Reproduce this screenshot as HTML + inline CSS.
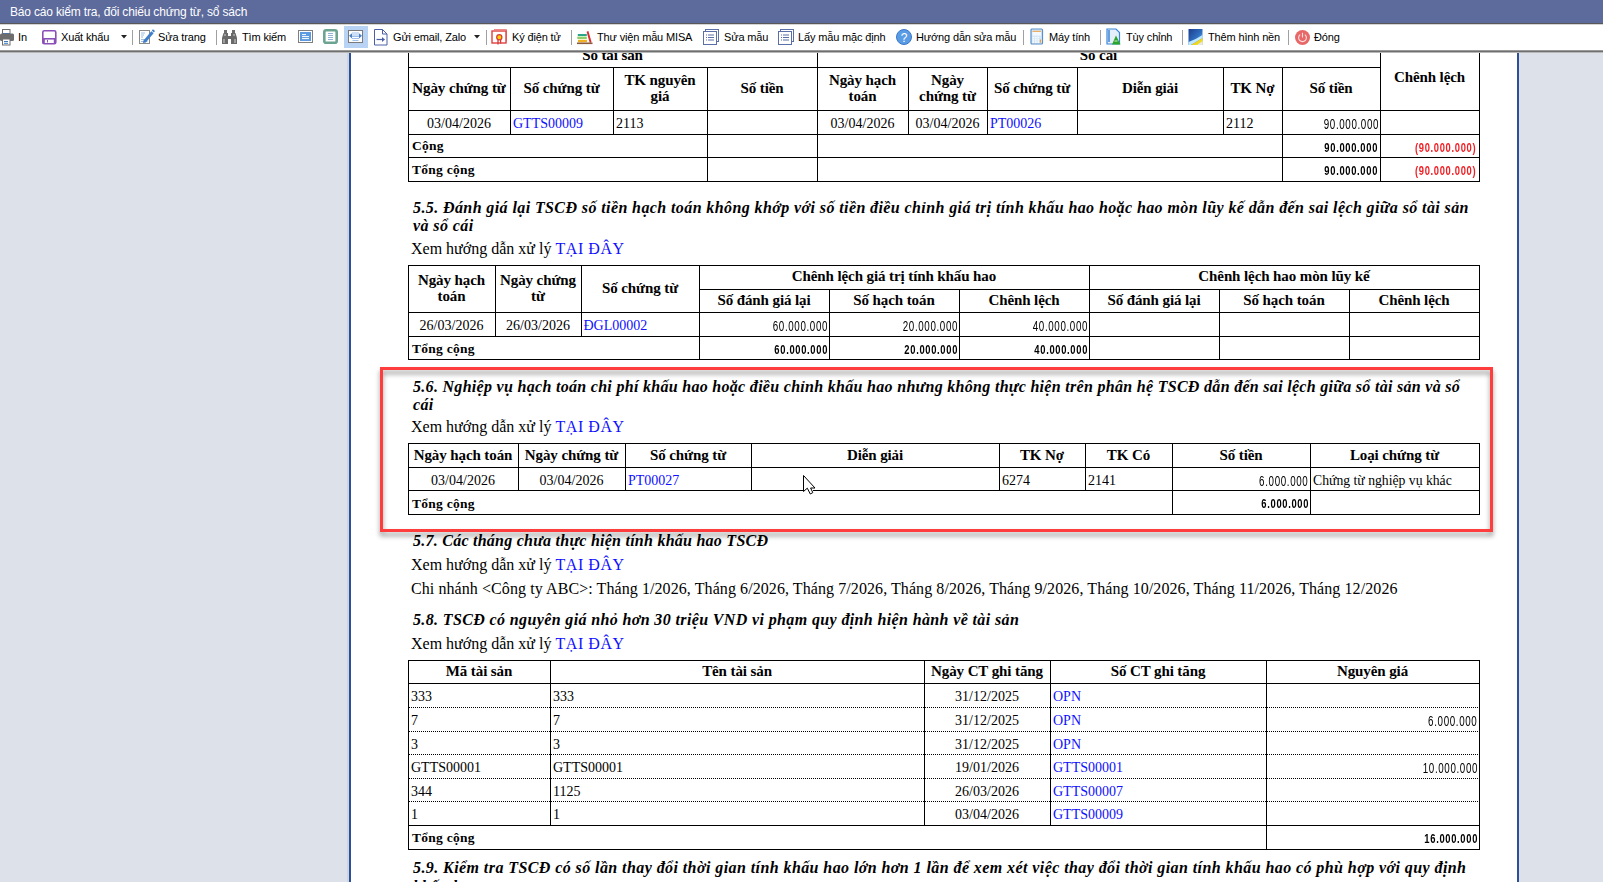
<!DOCTYPE html>
<html><head><meta charset="utf-8"><title>Báo cáo</title>
<style>
html,body{margin:0;padding:0;width:1603px;height:882px;overflow:hidden;background:#dde1e9}
.l{position:absolute;display:block}
.t{position:absolute;white-space:nowrap;color:#000}
.th{font:bold 15px/15px "Liberation Serif", serif;letter-spacing:-.1px}
.td{font:14px/14px "Liberation Serif", serif;letter-spacing:0px}
.tot{font:bold 13.5px/13.5px "Liberation Serif", serif;letter-spacing:.25px}
.lnk{color:#1010ff}
.lnk2{color:#1010ff;letter-spacing:.55px}
.h5{font:bold italic 16px/16px "Liberation Serif", serif}
.xem{font:16px/16px "Liberation Serif", serif}
.num{font-family:"Liberation Sans", sans-serif;white-space:nowrap}
.dot{background:repeating-linear-gradient(90deg,#000 0,#000 1px,transparent 1px,transparent 2px)}
#pg{position:absolute;left:0;top:0;width:1603px;height:882px;overflow:hidden}
#clip{position:absolute;left:0;top:52px;width:1603px;height:830px;overflow:hidden}
#inner{position:absolute;left:0;top:-52px;width:1603px;height:882px}
.tb{position:absolute;top:31px;font:11px/13px "Liberation Sans", sans-serif;color:#000;white-space:nowrap;letter-spacing:-.15px}
.title{position:absolute;left:10px;top:5px;font:12px/14px "Liberation Sans", sans-serif;color:#fff;letter-spacing:-.17px;white-space:nowrap}
</style></head><body>
<div id="pg">
<div id="clip"><div id="inner">
<div class="l" style="left:0;top:52px;width:1603px;height:830px;background:#dde1e9"></div>
<div class="l" style="left:347px;top:52px;width:2px;height:830px;background:#cfd4de"></div>
<div class="l" style="left:349px;top:52px;width:2px;height:830px;background:#2b4f98"></div>
<div class="l" style="left:351px;top:52px;width:1166px;height:830px;background:#fff"></div>
<div class="l" style="left:1517px;top:52px;width:2px;height:830px;background:#2b4f98"></div>
<div class="t th" style="left:408px;top:48.44px;width:409px;text-align:center;">Sổ tài sản</div>
<div class="t th" style="left:817px;top:48.44px;width:563px;text-align:center;">Sổ cái</div>
<div class="l" style="left:408px;top:67px;width:973px;height:1px;background:#000"></div>
<div class="l" style="left:408px;top:44px;width:1px;height:138px;background:#000"></div>
<div class="l" style="left:817px;top:44px;width:1px;height:138px;background:#000"></div>
<div class="l" style="left:1380px;top:44px;width:1px;height:138px;background:#000"></div>
<div class="l" style="left:1479px;top:44px;width:1px;height:138px;background:#000"></div>
<div class="l" style="left:510px;top:67px;width:1px;height:68px;background:#000"></div>
<div class="l" style="left:613px;top:67px;width:1px;height:68px;background:#000"></div>
<div class="l" style="left:707px;top:67px;width:1px;height:68px;background:#000"></div>
<div class="l" style="left:908px;top:67px;width:1px;height:68px;background:#000"></div>
<div class="l" style="left:987px;top:67px;width:1px;height:68px;background:#000"></div>
<div class="l" style="left:1077px;top:67px;width:1px;height:68px;background:#000"></div>
<div class="l" style="left:1223px;top:67px;width:1px;height:68px;background:#000"></div>
<div class="l" style="left:1282px;top:67px;width:1px;height:68px;background:#000"></div>
<div class="l" style="left:408px;top:110px;width:1072px;height:1px;background:#000"></div>
<div class="l" style="left:408px;top:134px;width:1072px;height:1px;background:#000"></div>
<div class="l" style="left:408px;top:157px;width:1072px;height:1px;background:#000"></div>
<div class="l" style="left:408px;top:181px;width:1072px;height:1px;background:#000"></div>
<div class="l" style="left:707px;top:134px;width:1px;height:48px;background:#000"></div>
<div class="l" style="left:1282px;top:134px;width:1px;height:48px;background:#000"></div>
<div class="t th" style="left:408px;top:80.94px;width:102px;text-align:center;">Ngày chứng từ</div>
<div class="t th" style="left:510px;top:80.94px;width:103px;text-align:center;">Số chứng từ</div>
<div class="t th" style="left:613px;top:73.14px;width:94px;text-align:center;">TK nguyên</div>
<div class="t th" style="left:613px;top:89.24px;width:94px;text-align:center;">giá</div>
<div class="t th" style="left:707px;top:80.94px;width:110px;text-align:center;">Số tiền</div>
<div class="t th" style="left:817px;top:72.64px;width:91px;text-align:center;">Ngày hạch</div>
<div class="t th" style="left:817px;top:88.94px;width:91px;text-align:center;">toán</div>
<div class="t th" style="left:908px;top:72.64px;width:79px;text-align:center;">Ngày</div>
<div class="t th" style="left:908px;top:88.94px;width:79px;text-align:center;">chứng từ</div>
<div class="t th" style="left:987px;top:80.94px;width:90px;text-align:center;">Số chứng từ</div>
<div class="t th" style="left:1077px;top:80.94px;width:146px;text-align:center;">Diễn giải</div>
<div class="t th" style="left:1223px;top:80.94px;width:59px;text-align:center;">TK Nợ</div>
<div class="t th" style="left:1282px;top:80.94px;width:98px;text-align:center;">Số tiền</div>
<div class="t th" style="left:1380px;top:69.94px;width:99px;text-align:center;">Chênh lệch</div>
<div class="t td" style="left:408px;top:117.28px;width:102px;text-align:center;">03/04/2026</div>
<div class="t td lnk" style="left:513px;top:117.28px;width:100px;text-align:left;">GTTS00009</div>
<div class="t td" style="left:616px;top:117.28px;width:91px;text-align:left;">2113</div>
<div class="t td" style="left:817px;top:117.28px;width:91px;text-align:center;">03/04/2026</div>
<div class="t td" style="left:908px;top:117.28px;width:79px;text-align:center;">03/04/2026</div>
<div class="t td lnk" style="left:990px;top:117.28px;width:87px;text-align:left;">PT00026</div>
<div class="t td" style="left:1226px;top:117.28px;width:56px;text-align:left;">2112</div>
<div class="t num" style="right:224.37px;top:117.45px;font-size:14px;line-height:14px;font-weight:normal;color:#000;letter-spacing:0.9px;transform:scaleX(0.7);transform-origin:100% 50%">90.000.000</div>
<div class="t tot" style="left:412px;top:139.19px;width:295px;text-align:left;">Cộng</div>
<div class="t tot" style="left:412px;top:162.89px;width:295px;text-align:left;">Tổng cộng</div>
<div class="t num" style="right:225.33px;top:141.63px;font-size:12.6px;line-height:12.6px;font-weight:bold;color:#000;letter-spacing:0.9px;transform:scaleX(0.745);transform-origin:100% 50%">90.000.000</div>
<div class="t num" style="right:225.33px;top:164.63px;font-size:12.6px;line-height:12.6px;font-weight:bold;color:#000;letter-spacing:0.9px;transform:scaleX(0.745);transform-origin:100% 50%">90.000.000</div>
<div class="t num" style="right:126.33px;top:141.63px;font-size:12.6px;line-height:12.6px;font-weight:bold;color:#f01e23;letter-spacing:0.9px;transform:scaleX(0.745);transform-origin:100% 50%">(90.000.000)</div>
<div class="t num" style="right:126.33px;top:164.63px;font-size:12.6px;line-height:12.6px;font-weight:bold;color:#f01e23;letter-spacing:0.9px;transform:scaleX(0.745);transform-origin:100% 50%">(90.000.000)</div>
<div class="t h5" style="left:413px;top:199.90px;width:1087px;text-align:left;letter-spacing:.4px">5.5. Đánh giá lại TSCĐ số tiền hạch toán không khớp với số tiền điều chỉnh giá trị tính khấu hao hoặc hao mòn lũy kế dẫn đến sai lệch giữa sổ tài sản</div>
<div class="t h5" style="left:413px;top:217.60px;width:1087px;text-align:left;letter-spacing:.4px">và sổ cái</div>
<div class="t xem" style="left:411px;top:241.20px;width:589px;text-align:left;">Xem hướng dẫn xử lý <span class="lnk2">TẠI ĐÂY</span></div>
<div class="l" style="left:408px;top:265px;width:1072px;height:1px;background:#000"></div>
<div class="l" style="left:699px;top:289px;width:781px;height:1px;background:#000"></div>
<div class="l" style="left:408px;top:312px;width:1072px;height:1px;background:#000"></div>
<div class="l" style="left:408px;top:336px;width:1072px;height:1px;background:#000"></div>
<div class="l" style="left:408px;top:359px;width:1072px;height:1px;background:#000"></div>
<div class="l" style="left:408px;top:265px;width:1px;height:72px;background:#000"></div>
<div class="l" style="left:495px;top:265px;width:1px;height:72px;background:#000"></div>
<div class="l" style="left:581px;top:265px;width:1px;height:72px;background:#000"></div>
<div class="l" style="left:699px;top:265px;width:1px;height:72px;background:#000"></div>
<div class="l" style="left:1089px;top:265px;width:1px;height:72px;background:#000"></div>
<div class="l" style="left:1479px;top:265px;width:1px;height:72px;background:#000"></div>
<div class="l" style="left:829px;top:289px;width:1px;height:71px;background:#000"></div>
<div class="l" style="left:959px;top:289px;width:1px;height:71px;background:#000"></div>
<div class="l" style="left:1219px;top:289px;width:1px;height:71px;background:#000"></div>
<div class="l" style="left:1349px;top:289px;width:1px;height:71px;background:#000"></div>
<div class="l" style="left:408px;top:265px;width:1px;height:95px;background:#000"></div>
<div class="l" style="left:699px;top:265px;width:1px;height:95px;background:#000"></div>
<div class="l" style="left:1089px;top:265px;width:1px;height:95px;background:#000"></div>
<div class="l" style="left:1479px;top:265px;width:1px;height:95px;background:#000"></div>
<div class="t th" style="left:408px;top:273.44px;width:87px;text-align:center;">Ngày hạch</div>
<div class="t th" style="left:408px;top:288.94px;width:87px;text-align:center;">toán</div>
<div class="t th" style="left:495px;top:273.44px;width:86px;text-align:center;">Ngày chứng</div>
<div class="t th" style="left:495px;top:288.94px;width:86px;text-align:center;">từ</div>
<div class="t th" style="left:581px;top:280.94px;width:118px;text-align:center;">Số chứng từ</div>
<div class="t th" style="left:699px;top:269.04px;width:390px;text-align:center;">Chênh lệch giá trị tính khấu hao</div>
<div class="t th" style="left:1089px;top:269.04px;width:390px;text-align:center;">Chênh lệch hao mòn lũy kế</div>
<div class="t th" style="left:699px;top:292.84px;width:130px;text-align:center;">Số đánh giá lại</div>
<div class="t th" style="left:829px;top:292.84px;width:130px;text-align:center;">Số hạch toán</div>
<div class="t th" style="left:959px;top:292.84px;width:130px;text-align:center;">Chênh lệch</div>
<div class="t th" style="left:1089px;top:292.84px;width:130px;text-align:center;">Số đánh giá lại</div>
<div class="t th" style="left:1219px;top:292.84px;width:130px;text-align:center;">Số hạch toán</div>
<div class="t th" style="left:1349px;top:292.84px;width:130px;text-align:center;">Chênh lệch</div>
<div class="t td" style="left:408px;top:318.77px;width:87px;text-align:center;">26/03/2026</div>
<div class="t td" style="left:495px;top:318.77px;width:86px;text-align:center;">26/03/2026</div>
<div class="t td lnk" style="left:583.5px;top:318.77px;width:115.5px;text-align:left;">ĐGL00002</div>
<div class="t num" style="right:775.37px;top:319.45px;font-size:14px;line-height:14px;font-weight:normal;color:#000;letter-spacing:0.9px;transform:scaleX(0.7);transform-origin:100% 50%">60.000.000</div>
<div class="t num" style="right:645.37px;top:319.45px;font-size:14px;line-height:14px;font-weight:normal;color:#000;letter-spacing:0.9px;transform:scaleX(0.7);transform-origin:100% 50%">20.000.000</div>
<div class="t num" style="right:515.37px;top:319.45px;font-size:14px;line-height:14px;font-weight:normal;color:#000;letter-spacing:0.9px;transform:scaleX(0.7);transform-origin:100% 50%">40.000.000</div>
<div class="t tot" style="left:412px;top:341.69px;width:287px;text-align:left;">Tổng cộng</div>
<div class="t num" style="right:775.33px;top:343.63px;font-size:12.6px;line-height:12.6px;font-weight:bold;color:#000;letter-spacing:0.9px;transform:scaleX(0.745);transform-origin:100% 50%">60.000.000</div>
<div class="t num" style="right:645.33px;top:343.63px;font-size:12.6px;line-height:12.6px;font-weight:bold;color:#000;letter-spacing:0.9px;transform:scaleX(0.745);transform-origin:100% 50%">20.000.000</div>
<div class="t num" style="right:515.33px;top:343.63px;font-size:12.6px;line-height:12.6px;font-weight:bold;color:#000;letter-spacing:0.9px;transform:scaleX(0.745);transform-origin:100% 50%">40.000.000</div>
<div class="t h5" style="left:413px;top:379.40px;width:1087px;text-align:left;letter-spacing:.3px">5.6. Nghiệp vụ hạch toán chi phí khấu hao hoặc điều chỉnh khấu hao nhưng không thực hiện trên phân hệ TSCĐ dẫn đến sai lệch giữa sổ tài sản và sổ</div>
<div class="t h5" style="left:413px;top:396.90px;width:1087px;text-align:left;letter-spacing:.3px">cái</div>
<div class="t xem" style="left:411px;top:419.30px;width:589px;text-align:left;">Xem hướng dẫn xử lý <span class="lnk2">TẠI ĐÂY</span></div>
<div class="l" style="left:408px;top:443px;width:1072px;height:1px;background:#000"></div>
<div class="l" style="left:408px;top:467px;width:1072px;height:1px;background:#000"></div>
<div class="l" style="left:408px;top:490px;width:1072px;height:1px;background:#000"></div>
<div class="l" style="left:408px;top:514px;width:1072px;height:1px;background:#000"></div>
<div class="l" style="left:408px;top:443px;width:1px;height:48px;background:#000"></div>
<div class="l" style="left:518px;top:443px;width:1px;height:48px;background:#000"></div>
<div class="l" style="left:625px;top:443px;width:1px;height:48px;background:#000"></div>
<div class="l" style="left:751px;top:443px;width:1px;height:48px;background:#000"></div>
<div class="l" style="left:999px;top:443px;width:1px;height:48px;background:#000"></div>
<div class="l" style="left:1085px;top:443px;width:1px;height:48px;background:#000"></div>
<div class="l" style="left:1172px;top:443px;width:1px;height:48px;background:#000"></div>
<div class="l" style="left:1310px;top:443px;width:1px;height:48px;background:#000"></div>
<div class="l" style="left:1479px;top:443px;width:1px;height:48px;background:#000"></div>
<div class="l" style="left:408px;top:443px;width:1px;height:72px;background:#000"></div>
<div class="l" style="left:1172px;top:443px;width:1px;height:72px;background:#000"></div>
<div class="l" style="left:1310px;top:443px;width:1px;height:72px;background:#000"></div>
<div class="l" style="left:1479px;top:443px;width:1px;height:72px;background:#000"></div>
<div class="t th" style="left:408px;top:447.94px;width:110px;text-align:center;">Ngày hạch toán</div>
<div class="t th" style="left:518px;top:447.94px;width:107px;text-align:center;">Ngày chứng từ</div>
<div class="t th" style="left:625px;top:447.94px;width:126px;text-align:center;">Số chứng từ</div>
<div class="t th" style="left:751px;top:447.94px;width:248px;text-align:center;">Diễn giải</div>
<div class="t th" style="left:999px;top:447.94px;width:86px;text-align:center;">TK Nợ</div>
<div class="t th" style="left:1085px;top:447.94px;width:87px;text-align:center;">TK Có</div>
<div class="t th" style="left:1172px;top:447.94px;width:138px;text-align:center;">Số tiền</div>
<div class="t th" style="left:1310px;top:447.94px;width:169px;text-align:center;">Loại chứng từ</div>
<div class="t td" style="left:408px;top:474.47px;width:110px;text-align:center;">03/04/2026</div>
<div class="t td" style="left:518px;top:474.47px;width:107px;text-align:center;">03/04/2026</div>
<div class="t td lnk" style="left:628px;top:474.47px;width:123px;text-align:left;">PT00027</div>
<div class="t td" style="left:1002px;top:474.47px;width:83px;text-align:left;">6274</div>
<div class="t td" style="left:1088px;top:474.47px;width:84px;text-align:left;">2141</div>
<div class="t num" style="right:294.37px;top:474.45px;font-size:14px;line-height:14px;font-weight:normal;color:#000;letter-spacing:0.9px;transform:scaleX(0.7);transform-origin:100% 50%">6.000.000</div>
<div class="t td" style="left:1313px;top:474.17px;width:166px;text-align:left;font-size:13.7px">Chứng từ nghiệp vụ khác</div>
<div class="t tot" style="left:412px;top:496.69px;width:760px;text-align:left;">Tổng cộng</div>
<div class="t num" style="right:294.33px;top:497.63px;font-size:12.6px;line-height:12.6px;font-weight:bold;color:#000;letter-spacing:0.9px;transform:scaleX(0.745);transform-origin:100% 50%">6.000.000</div>
<div class="t h5" style="left:413px;top:533.40px;width:1087px;text-align:left;letter-spacing:.25px">5.7. Các tháng chưa thực hiện tính khấu hao TSCĐ</div>
<div class="t xem" style="left:411px;top:557.10px;width:589px;text-align:left;">Xem hướng dẫn xử lý <span class="lnk2">TẠI ĐÂY</span></div>
<div class="t xem" style="left:411px;top:581.00px;width:1089px;text-align:left;letter-spacing:.08px">Chi nhánh &lt;Công ty ABC&gt;: Tháng 1/2026, Tháng 6/2026, Tháng 7/2026, Tháng 8/2026, Tháng 9/2026, Tháng 10/2026, Tháng 11/2026, Tháng 12/2026</div>
<div class="t h5" style="left:413px;top:611.80px;width:1087px;text-align:left;letter-spacing:.37px">5.8. TSCĐ có nguyên giá nhỏ hơn 30 triệu VND vi phạm quy định hiện hành về tài sản</div>
<div class="t xem" style="left:411px;top:636.20px;width:589px;text-align:left;">Xem hướng dẫn xử lý <span class="lnk2">TẠI ĐÂY</span></div>
<div class="l" style="left:408px;top:660px;width:1072px;height:1px;background:#000"></div>
<div class="l" style="left:408px;top:683px;width:1072px;height:1px;background:#000"></div>
<div class="l dot" style="left:409px;top:707px;width:141px;height:1px"></div>
<div class="l dot" style="left:551px;top:707px;width:373px;height:1px"></div>
<div class="l dot" style="left:925px;top:707px;width:125px;height:1px"></div>
<div class="l dot" style="left:1051px;top:707px;width:215px;height:1px"></div>
<div class="l dot" style="left:1267px;top:707px;width:212px;height:1px"></div>
<div class="l dot" style="left:409px;top:731px;width:141px;height:1px"></div>
<div class="l dot" style="left:551px;top:731px;width:373px;height:1px"></div>
<div class="l dot" style="left:925px;top:731px;width:125px;height:1px"></div>
<div class="l dot" style="left:1051px;top:731px;width:215px;height:1px"></div>
<div class="l dot" style="left:1267px;top:731px;width:212px;height:1px"></div>
<div class="l dot" style="left:409px;top:754px;width:141px;height:1px"></div>
<div class="l dot" style="left:551px;top:754px;width:373px;height:1px"></div>
<div class="l dot" style="left:925px;top:754px;width:125px;height:1px"></div>
<div class="l dot" style="left:1051px;top:754px;width:215px;height:1px"></div>
<div class="l dot" style="left:1267px;top:754px;width:212px;height:1px"></div>
<div class="l dot" style="left:409px;top:778px;width:141px;height:1px"></div>
<div class="l dot" style="left:551px;top:778px;width:373px;height:1px"></div>
<div class="l dot" style="left:925px;top:778px;width:125px;height:1px"></div>
<div class="l dot" style="left:1051px;top:778px;width:215px;height:1px"></div>
<div class="l dot" style="left:1267px;top:778px;width:212px;height:1px"></div>
<div class="l dot" style="left:409px;top:801px;width:141px;height:1px"></div>
<div class="l dot" style="left:551px;top:801px;width:373px;height:1px"></div>
<div class="l dot" style="left:925px;top:801px;width:125px;height:1px"></div>
<div class="l dot" style="left:1051px;top:801px;width:215px;height:1px"></div>
<div class="l dot" style="left:1267px;top:801px;width:212px;height:1px"></div>
<div class="l" style="left:408px;top:825px;width:1072px;height:1px;background:#000"></div>
<div class="l" style="left:408px;top:849px;width:1072px;height:1px;background:#000"></div>
<div class="l" style="left:408px;top:660px;width:1px;height:166px;background:#000"></div>
<div class="l" style="left:550px;top:660px;width:1px;height:166px;background:#000"></div>
<div class="l" style="left:924px;top:660px;width:1px;height:166px;background:#000"></div>
<div class="l" style="left:1050px;top:660px;width:1px;height:166px;background:#000"></div>
<div class="l" style="left:1266px;top:660px;width:1px;height:166px;background:#000"></div>
<div class="l" style="left:1479px;top:660px;width:1px;height:166px;background:#000"></div>
<div class="l" style="left:408px;top:660px;width:1px;height:190px;background:#000"></div>
<div class="l" style="left:1266px;top:660px;width:1px;height:190px;background:#000"></div>
<div class="l" style="left:1479px;top:660px;width:1px;height:190px;background:#000"></div>
<div class="t th" style="left:408px;top:663.64px;width:142px;text-align:center;">Mã tài sản</div>
<div class="t th" style="left:550px;top:663.64px;width:374px;text-align:center;">Tên tài sản</div>
<div class="t th" style="left:924px;top:663.64px;width:126px;text-align:center;">Ngày CT ghi tăng</div>
<div class="t th" style="left:1050px;top:663.64px;width:216px;text-align:center;">Số CT ghi tăng</div>
<div class="t th" style="left:1266px;top:663.64px;width:213px;text-align:center;">Nguyên giá</div>
<div class="t td" style="left:411px;top:690.27px;width:139px;text-align:left;">333</div>
<div class="t td" style="left:553px;top:690.27px;width:371px;text-align:left;">333</div>
<div class="t td" style="left:924px;top:690.27px;width:126px;text-align:center;">31/12/2025</div>
<div class="t td lnk" style="left:1053px;top:690.27px;width:213px;text-align:left;">OPN</div>
<div class="t td" style="left:411px;top:714.27px;width:139px;text-align:left;">7</div>
<div class="t td" style="left:553px;top:714.27px;width:371px;text-align:left;">7</div>
<div class="t td" style="left:924px;top:714.27px;width:126px;text-align:center;">31/12/2025</div>
<div class="t td lnk" style="left:1053px;top:714.27px;width:213px;text-align:left;">OPN</div>
<div class="t num" style="right:125.37px;top:714.45px;font-size:14px;line-height:14px;font-weight:normal;color:#000;letter-spacing:0.9px;transform:scaleX(0.7);transform-origin:100% 50%">6.000.000</div>
<div class="t td" style="left:411px;top:738.27px;width:139px;text-align:left;">3</div>
<div class="t td" style="left:553px;top:738.27px;width:371px;text-align:left;">3</div>
<div class="t td" style="left:924px;top:738.27px;width:126px;text-align:center;">31/12/2025</div>
<div class="t td lnk" style="left:1053px;top:738.27px;width:213px;text-align:left;">OPN</div>
<div class="t td" style="left:411px;top:761.27px;width:139px;text-align:left;">GTTS00001</div>
<div class="t td" style="left:553px;top:761.27px;width:371px;text-align:left;">GTTS00001</div>
<div class="t td" style="left:924px;top:761.27px;width:126px;text-align:center;">19/01/2026</div>
<div class="t td lnk" style="left:1053px;top:761.27px;width:213px;text-align:left;">GTTS00001</div>
<div class="t num" style="right:125.37px;top:761.45px;font-size:14px;line-height:14px;font-weight:normal;color:#000;letter-spacing:0.9px;transform:scaleX(0.7);transform-origin:100% 50%">10.000.000</div>
<div class="t td" style="left:411px;top:785.27px;width:139px;text-align:left;">344</div>
<div class="t td" style="left:553px;top:785.27px;width:371px;text-align:left;">1125</div>
<div class="t td" style="left:924px;top:785.27px;width:126px;text-align:center;">26/03/2026</div>
<div class="t td lnk" style="left:1053px;top:785.27px;width:213px;text-align:left;">GTTS00007</div>
<div class="t td" style="left:411px;top:808.27px;width:139px;text-align:left;">1</div>
<div class="t td" style="left:553px;top:808.27px;width:371px;text-align:left;">1</div>
<div class="t td" style="left:924px;top:808.27px;width:126px;text-align:center;">03/04/2026</div>
<div class="t td lnk" style="left:1053px;top:808.27px;width:213px;text-align:left;">GTTS00009</div>
<div class="t tot" style="left:412px;top:831.39px;width:854px;text-align:left;">Tổng cộng</div>
<div class="t num" style="right:125.33px;top:832.63px;font-size:12.6px;line-height:12.6px;font-weight:bold;color:#000;letter-spacing:0.9px;transform:scaleX(0.745);transform-origin:100% 50%">16.000.000</div>
<div class="t h5" style="left:413px;top:860.10px;width:1087px;text-align:left;letter-spacing:.42px">5.9. Kiểm tra TSCĐ có số lần thay đổi thời gian tính khấu hao lớn hơn 1 lần để xem xét việc thay đổi thời gian tính khấu hao có phù hợp với quy định</div>
<div class="t h5" style="left:413px;top:878.90px;width:1087px;text-align:left;letter-spacing:.4px">khấu hao</div>
<div class="l" style="left:380px;top:367px;width:1107px;height:159px;border:3px solid #ff3d3d;filter:drop-shadow(0px 4px 2.5px rgba(0,0,0,.42))"></div>
<svg class="l" style="left:802px;top:474px" width="16" height="22" viewBox="0 0 16 22"><rect x="2" y="15.5" width="9" height="2" fill="#fff"/><path d="M1.5 1.5 L1.5 17.5 L5.3 14.2 L8.3 20 L10.8 18.6 L8.6 14 L13 14 Z" fill="#fff" stroke="#000" stroke-width="1" stroke-linejoin="miter"/></svg>
</div></div>
<div class="l" style="left:0;top:0;width:1603px;height:23px;background:#5c6a9c"></div>
<div class="title">Báo cáo kiểm tra, đối chiếu chứng từ, sổ sách</div>
<div class="l" style="left:0;top:23px;width:1603px;height:1px;background:#585858"></div>
<div class="l" style="left:0;top:24px;width:1603px;height:26px;background:#fff"></div>
<div class="l" style="left:0;top:24px;width:1603px;height:1px;background:#d4d4d4"></div>
<div class="l" style="left:0;top:50px;width:1603px;height:1px;background:#9a9a9a"></div>
<div class="l" style="left:0;top:51px;width:1603px;height:1px;background:#6f6f6f"></div>
<div class="l" style="left:0;top:52px;width:1603px;height:1px;background:#b8b8b8"></div>
<svg class="l" style="left:0px;top:28px" width="15" height="18" viewBox="0 0 15 18"><rect x="2.5" y="1.5" width="7.5" height="4.5" fill="#fff" stroke="#6e6e6e"/><line x1="2.5" y1="5.5" x2="10" y2="5.5" stroke="#3c78c0"/><rect x="0" y="5.5" width="14" height="7.5" rx="1.5" fill="#6e6e6e"/><rect x="2.5" y="11" width="7.5" height="6" fill="#fff" stroke="#6e6e6e"/><line x1="4" y1="13.5" x2="8" y2="13.5" stroke="#3c78c0"/><line x1="4" y1="15.3" x2="8" y2="15.3" stroke="#3c78c0"/></svg>
<div class="tb" style="left:18px">In</div>
<svg class="l" style="left:42px;top:30px" width="15" height="15" viewBox="0 0 15 15"><rect x="0.8" y="0.8" width="13" height="13" rx="1.5" fill="none" stroke="#8a4fb8" stroke-width="1.6"/><rect x="2.5" y="2" width="9.5" height="7" fill="#fff"/><line x1="0.8" y1="8.8" x2="13.8" y2="8.8" stroke="#8a4fb8" stroke-width="1.6"/><rect x="0.8" y="8.8" width="2" height="5" fill="#8a4fb8"/><rect x="11.8" y="8.8" width="2" height="5" fill="#8a4fb8"/><line x1="5.5" y1="10" x2="5.5" y2="12.5" stroke="#8a4fb8" stroke-width="1"/></svg>
<div class="tb" style="left:61px">Xuất khẩu</div>
<svg class="l" style="left:121px;top:35px" width="6" height="4" viewBox="0 0 6 4"><path d="M0 0H6L3 3.5Z" fill="#222"/></svg>
<div class="l" style="left:132px;top:30px;width:1px;height:15px;background:#a0a0a0"></div>
<svg class="l" style="left:138px;top:28px" width="17" height="17" viewBox="0 0 17 17"><rect x="1.5" y="2.5" width="10" height="13" fill="#fff" stroke="#8a8a8a"/><line x1="3" y1="5" x2="7" y2="5" stroke="#9cbde4"/><line x1="3" y1="7" x2="6" y2="7" stroke="#9cbde4"/><line x1="3" y1="9" x2="5" y2="9" stroke="#9cbde4"/><line x1="3" y1="11.5" x2="9.5" y2="11.5" stroke="#9cbde4"/><line x1="3" y1="13.5" x2="9.5" y2="13.5" stroke="#9cbde4"/><path d="M5.5 12.5 L13.3 3.2 L15.6 5.2 L7.8 14.5 L5 15 Z" fill="#3f7ec8"/><path d="M13.8 2.6l1.2-1.4 2 1.8-1.2 1.4z" fill="#3f7ec8"/></svg>
<div class="tb" style="left:158px">Sửa trang</div>
<div class="l" style="left:216px;top:30px;width:1px;height:15px;background:#a0a0a0"></div>
<svg class="l" style="left:222px;top:30px" width="16" height="14" viewBox="0 0 16 14"><path d="M2 0h3v3h-3zM10 0h3v3h-3z" fill="#6e6e6e"/><path d="M1.5 3h4.5v3h3v-3h4.5l1.5 5v6h-6v-5h-3v5h-6v-6z" fill="#6a6a6a"/><rect x="1.5" y="9" width="1" height="4" fill="#d0d0d0"/><rect x="12.5" y="9" width="1" height="4" fill="#d0d0d0"/><rect x="2.5" y="4" width="1" height="2" fill="#cfcfcf"/><rect x="11.5" y="4" width="1" height="2" fill="#cfcfcf"/></svg>
<div class="tb" style="left:242px">Tìm kiếm</div>
<svg class="l" style="left:297px;top:29px" width="17" height="15" viewBox="0 0 17 15"><rect x="1.5" y="1.5" width="14" height="12" fill="#fff" stroke="#7f7f7f"/><rect x="3" y="3" width="11" height="9" fill="#5d9ae0"/><line x1="5" y1="5.6" x2="9" y2="5.6" stroke="#fff"/><line x1="5" y1="7.6" x2="12" y2="7.6" stroke="#fff"/><line x1="5" y1="9.6" x2="12" y2="9.6" stroke="#fff"/></svg>
<svg class="l" style="left:322px;top:28px" width="17" height="17" viewBox="0 0 17 17"><rect x="2.3" y="2.3" width="12.4" height="12.4" rx="1.8" fill="#fff" stroke="#6da491" stroke-width="2.6"/><line x1="6" y1="5.5" x2="11" y2="5.5" stroke="#8fb2d6"/><line x1="6" y1="7.5" x2="11" y2="7.5" stroke="#8fb2d6"/><line x1="6" y1="9.5" x2="11" y2="9.5" stroke="#8fb2d6"/><line x1="6" y1="11.5" x2="11" y2="11.5" stroke="#8fb2d6"/></svg>
<div class="l" style="left:344px;top:26px;width:24px;height:22px;background:#b9d3f5"></div>
<svg class="l" style="left:347px;top:29px" width="17" height="15" viewBox="0 0 17 15"><rect x="1.5" y="1.5" width="14" height="12" fill="#fff" stroke="#7a7a7a"/><line x1="5" y1="4" x2="12" y2="4" stroke="#9cc0ea"/><line x1="4" y1="6" x2="13" y2="6" stroke="#9cc0ea"/><line x1="4" y1="7.5" x2="13" y2="7.5" stroke="#9cc0ea"/><line x1="5" y1="9.5" x2="12" y2="9.5" stroke="#9cc0ea"/><line x1="5.5" y1="11.5" x2="11.5" y2="11.5" stroke="#9cc0ea"/><path d="M2 6.8l3-2.6v5.2zM15 6.8l-3-2.6v5.2z" fill="#4a82c8"/></svg>
<svg class="l" style="left:374px;top:29px" width="14" height="17" viewBox="0 0 14 17"><path d="M0.5 0.5h8l4.5 4.5v11h-12.5z" fill="#fff" stroke="#4c5ea8"/><path d="M8.5 0.5v4.5h4.5" fill="none" stroke="#4c5ea8"/><path d="M2.5 10.5h8" stroke="#4c5ea8" stroke-width="1.2"/><path d="M8 8l2.8 2.5-2.8 2.5z" fill="#4c5ea8"/></svg>
<div class="tb" style="left:393px">Gửi email, Zalo</div>
<svg class="l" style="left:474px;top:35px" width="6" height="4" viewBox="0 0 6 4"><path d="M0 0H6L3 3.5Z" fill="#222"/></svg>
<div class="l" style="left:486px;top:30px;width:1px;height:15px;background:#a0a0a0"></div>
<svg class="l" style="left:491px;top:28px" width="18" height="18" viewBox="0 0 18 18"><path d="M3 1.5h12.5v11.5l-2 2" fill="none" stroke="#e88a8a" stroke-width="1"/><rect x="1" y="3" width="14" height="12" fill="#fff" stroke="#e04040" stroke-width="1.4"/><circle cx="8.3" cy="9.3" r="2.6" fill="#f7d200" stroke="#d83a3a" stroke-width="1.2"/><path d="M7 11.5v5M9.6 11.5v4" stroke="#d83a3a" stroke-width="1.3"/></svg>
<div class="tb" style="left:512px">Ký điện tử</div>
<div class="l" style="left:571px;top:30px;width:1px;height:15px;background:#a0a0a0"></div>
<svg class="l" style="left:577px;top:30px" width="16" height="15" viewBox="0 0 16 15"><rect x="0.8" y="4" width="9" height="2" fill="#2aa58a"/><rect x="0.3" y="6.6" width="9.5" height="2.4" fill="#8fcf6a"/><rect x="1" y="9.8" width="9" height="2.4" fill="#f0b020"/><path d="M9.6 1.8l1.8-0.8 3.2 11.2-1.8 0.8z" fill="#dc2c2c"/><rect x="0" y="12.5" width="15.5" height="1.6" fill="#8b5a3a"/></svg>
<div class="tb" style="left:597px">Thư viện mẫu MISA</div>
<svg class="l" style="left:703px;top:29px" width="16" height="16" viewBox="0 0 16 16"><rect x="2.5" y="0.5" width="13" height="12" fill="#fff" stroke="#5a6ea8"/><rect x="0.5" y="2.5" width="13" height="13" fill="#fff" stroke="#5a6ea8"/><line x1="3" y1="6" x2="4" y2="6" stroke="#5a6ea8"/><line x1="5" y1="6" x2="11" y2="6" stroke="#5a6ea8"/><line x1="3" y1="8.5" x2="4" y2="8.5" stroke="#5a6ea8"/><line x1="5" y1="8.5" x2="11" y2="8.5" stroke="#5a6ea8"/><line x1="3" y1="11" x2="4" y2="11" stroke="#5a6ea8"/><line x1="5" y1="11" x2="11" y2="11" stroke="#5a6ea8"/></svg>
<div class="tb" style="left:724px">Sửa mẫu</div>
<svg class="l" style="left:778px;top:29px" width="16" height="16" viewBox="0 0 16 16"><rect x="2.5" y="0.5" width="13" height="12" fill="#fff" stroke="#5a6ea8"/><rect x="0.5" y="2.5" width="13" height="13" fill="#fff" stroke="#5a6ea8"/><line x1="3" y1="6" x2="4" y2="6" stroke="#5a6ea8"/><line x1="5" y1="6" x2="11" y2="6" stroke="#5a6ea8"/><line x1="3" y1="8.5" x2="4" y2="8.5" stroke="#5a6ea8"/><line x1="5" y1="8.5" x2="11" y2="8.5" stroke="#5a6ea8"/><line x1="3" y1="11" x2="4" y2="11" stroke="#5a6ea8"/><line x1="5" y1="11" x2="11" y2="11" stroke="#5a6ea8"/></svg>
<div class="tb" style="left:798px">Lấy mẫu mặc định</div>
<svg class="l" style="left:896px;top:29px" width="16" height="16" viewBox="0 0 16 16"><circle cx="8" cy="8" r="7.5" fill="#5a9be6" stroke="#3a78c8"/><text x="8" y="12.5" font-family="Liberation Sans" font-size="12" fill="#fff" text-anchor="middle">?</text></svg>
<div class="tb" style="left:916px">Hướng dẫn sửa mẫu</div>
<div class="l" style="left:1023px;top:30px;width:1px;height:15px;background:#a0a0a0"></div>
<svg class="l" style="left:1030px;top:28px" width="14" height="17" viewBox="0 0 14 17"><rect x="1" y="1" width="11.5" height="15" rx="1" fill="#d6e8f8" stroke="#5b8fc8" stroke-width="1.2"/><line x1="2.5" y1="3.3" x2="11" y2="3.3" stroke="#f0a040" stroke-width="1"/><rect x="2.5" y="4" width="8.5" height="3.5" fill="#f4f9ff"/><path d="M2.5 9h1.5v1.2h-1.5zM5 9h1.5v1.2h-1.5zM7.5 9h1.5v1.2h-1.5zM2.5 11.3h1.5v1.2h-1.5zM5 11.3h1.5v1.2h-1.5zM7.5 11.3h1.5v1.2h-1.5zM2.5 13.5h1.5v1.2h-1.5zM5 13.5h1.5v1.2h-1.5zM7.5 13.5h1.5v1.2h-1.5z" fill="#fff"/><rect x="9.8" y="11.5" width="1.2" height="3.2" fill="#f0a040"/></svg>
<div class="tb" style="left:1049px">Máy tính</div>
<div class="l" style="left:1100px;top:30px;width:1px;height:15px;background:#a0a0a0"></div>
<svg class="l" style="left:1106px;top:28px" width="16" height="17" viewBox="0 0 16 17"><path d="M1 1h9l3.5 3.5v11.5h-12.5z" fill="#e4effa" stroke="#3a86d8" stroke-width="1.2"/><path d="M3 2v12" stroke="#3a86d8" stroke-width="1.5"/><path d="M6 16.5l4-9 4.5 9z" fill="#2aa52a"/><path d="M8.5 13h3" stroke="#fff" stroke-width=".8"/></svg>
<div class="tb" style="left:1126px">Tùy chỉnh</div>
<div class="l" style="left:1182px;top:30px;width:1px;height:15px;background:#a0a0a0"></div>
<svg class="l" style="left:1188px;top:29px" width="16" height="16" viewBox="0 0 16 16"><defs><linearGradient id="gbg" x1="0" y1="0" x2="1" y2="1"><stop offset="0" stop-color="#1c3c8c"/><stop offset=".55" stop-color="#2f6fc0"/><stop offset="1" stop-color="#7fc0f0"/></linearGradient></defs><rect x="0.5" y="0" width="14" height="16" fill="url(#gbg)"/><path d="M0.5 13 Q7 11 14.5 6 V9 Q8 13 3 16 H0.5Z" fill="#bfe6ff"/><path d="M3 16 Q9 12.5 14.5 9 V16Z" fill="#f0d81c"/><path d="M9 16 L14.5 12 V16Z" fill="#e8e8e8"/></svg>
<div class="tb" style="left:1208px">Thêm hình nền</div>
<div class="l" style="left:1288px;top:30px;width:1px;height:15px;background:#a0a0a0"></div>
<svg class="l" style="left:1295px;top:30px" width="16" height="16" viewBox="0 0 16 16"><circle cx="7.5" cy="7.5" r="7.5" fill="#e86868"/><path d="M5.2 4.6a3.9 3.9 0 1 0 4.6 0" fill="none" stroke="#fbe0e0" stroke-width="1.1"/><line x1="7.5" y1="2.8" x2="7.5" y2="7.5" stroke="#fbe0e0" stroke-width="1.1"/></svg>
<div class="tb" style="left:1314px">Đóng</div>
</div>
</body></html>
